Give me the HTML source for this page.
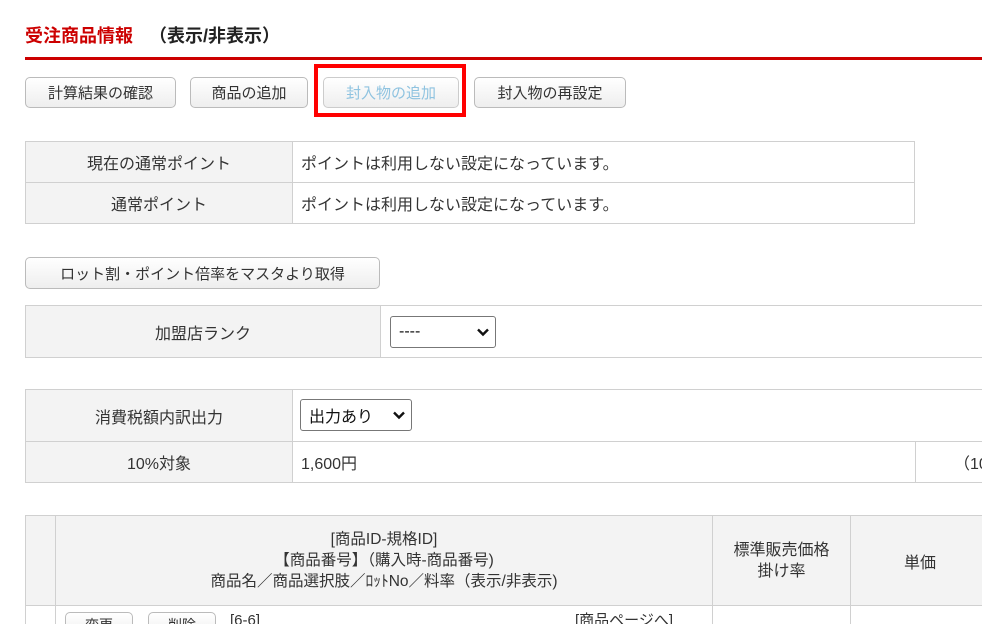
<!DOCTYPE html>
<html><head><meta charset="utf-8"><style>
*{margin:0;padding:0;box-sizing:border-box}
html,body{width:982px;height:636px;overflow:hidden}
body{background:#fff;position:relative;font-family:"Liberation Sans","Noto Sans CJK JP",sans-serif;font-size:16px;color:#333}
#wrap{position:absolute;left:0;top:0;width:982px;height:624px;overflow:hidden}
.a{position:absolute}
.btn{position:absolute;height:31px;border:1px solid #bbb;border-radius:5px;background:linear-gradient(#fff,#eee);font-size:15px;color:#333;display:flex;align-items:center;justify-content:center}
.c{position:absolute;border:1px solid #d0d0d0;display:flex;align-items:center;font-size:16px;color:#333}
.g{background:#f3f3f3;justify-content:center;text-align:center}
.col{flex-direction:column;justify-content:center;align-items:center}
.w{background:#fff;padding-left:8px}
.sel{position:absolute;height:32px;border:1px solid #777;border-radius:3px;background:#fff;font-size:16px;color:#111;display:flex;align-items:center;padding-left:8px}
.sel svg{position:absolute;right:6px;top:11px}
</style></head><body><div id="wrap">
<div class="a" style="left:25px;top:22px;font-size:18px;font-weight:bold;color:#c00">受注商品情報<span style="color:#222;margin-left:16px">（表示/非表示）</span></div>
<div class="a" style="left:25px;top:57px;width:957px;height:3px;background:#c00"></div>

<div class="btn" style="left:25px;top:77px;width:151px">計算結果の確認</div>
<div class="btn" style="left:190px;top:77px;width:118px">商品の追加</div>
<div class="btn" style="left:323px;top:77px;width:136px;color:#8fc3e0;border-color:#ccc">封入物の追加</div>
<div class="btn" style="left:474px;top:77px;width:152px">封入物の再設定</div>
<div class="a" style="left:314px;top:64px;width:152px;height:53px;border:4px solid #f00"></div>

<div class="c g" style="left:25px;top:141px;width:268px;height:42px">現在の通常ポイント</div>
<div class="c w" style="left:292px;top:141px;width:623px;height:42px">ポイントは利用しない設定になっています。</div>
<div class="c g" style="left:25px;top:182px;width:268px;height:42px">通常ポイント</div>
<div class="c w" style="left:292px;top:182px;width:623px;height:42px">ポイントは利用しない設定になっています。</div>

<div class="btn" style="left:25px;top:257px;width:355px;height:32px">ロット割・ポイント倍率をマスタより取得</div>

<div class="c g" style="left:25px;top:305px;width:356px;height:53px">加盟店ランク</div>
<div class="c w" style="left:380px;top:305px;width:610px;height:53px"></div>
<div class="sel" style="left:390px;top:316px;width:106px">----<svg width="12" height="9" viewBox="0 0 12 9"><path d="M1 1.5L6 6.5L11 1.5" fill="none" stroke="#111" stroke-width="2.4"/></svg></div>

<div class="c g" style="left:25px;top:389px;width:268px;height:53px">消費税額内訳出力</div>
<div class="c w" style="left:292px;top:389px;width:700px;height:53px"></div>
<div class="sel" style="left:300px;top:399px;width:112px">出力あり<svg width="12" height="9" viewBox="0 0 12 9"><path d="M1 1.5L6 6.5L11 1.5" fill="none" stroke="#111" stroke-width="2.4"/></svg></div>
<div class="c g" style="left:25px;top:441px;width:268px;height:42px">10%対象</div>
<div class="c w" style="left:292px;top:441px;width:624px;height:42px">1,600円</div>
<div class="c w" style="left:915px;top:441px;width:80px;height:42px;padding-left:38px">（10</div>

<div class="c g" style="left:25px;top:515px;width:31px;height:91px"></div>
<div class="c g col" style="left:55px;top:515px;width:658px;height:91px;line-height:21px;font-size:15.5px">[商品ID-規格ID]<br>【商品番号】（購入時-商品番号)<br>商品名／商品選択肢／ﾛｯﾄNo／料率（表示/非表示)</div>
<div class="c g col" style="left:712px;top:515px;width:139px;height:91px;line-height:21px">標準販売価格<br>掛け率</div>
<div class="c g" style="left:850px;top:515px;width:140px;height:91px">単価</div>
<div class="c w" style="left:25px;top:605px;width:31px;height:30px"></div>
<div class="c w" style="left:55px;top:605px;width:658px;height:30px"></div>
<div class="c w" style="left:712px;top:605px;width:139px;height:30px"></div>
<div class="c w" style="left:850px;top:605px;width:140px;height:30px"></div>
<div class="btn" style="left:65px;top:612px;width:68px;height:26px;font-size:14px">変更</div>
<div class="btn" style="left:148px;top:612px;width:68px;height:26px;font-size:14px">削除</div>
<div class="a" style="left:230px;top:612px;font-size:15px">[6-6]</div>
<div class="a" style="left:575px;top:609px;font-size:15px">[商品ページへ]</div>
</div></body></html>
